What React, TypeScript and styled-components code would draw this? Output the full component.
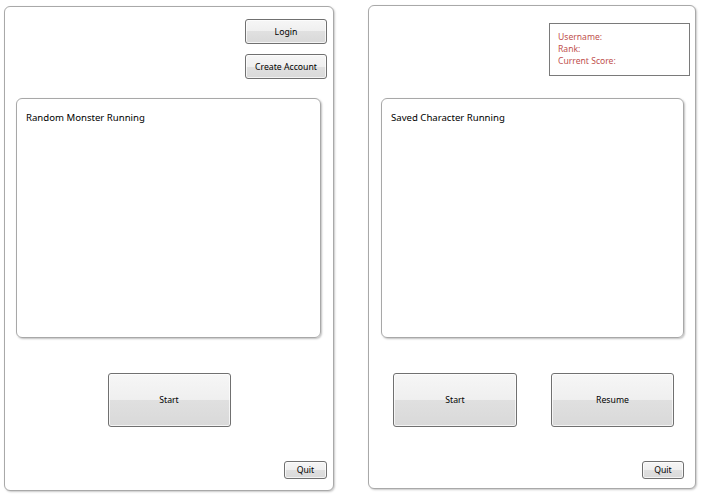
import React from "react";
import styled, { createGlobalStyle } from "styled-components";

const Global = createGlobalStyle`
  html, body { margin: 0; padding: 0; background: #ffffff; }
  body { font-family: "Noto Sans", "Open Sans", sans-serif; }
  * { box-sizing: border-box; }
`;

const Page = styled.div`
  display: flex;
  align-items: flex-start;
  gap: 34px;
  padding-left: 4px;
  width: 705px;
  height: 499px;
`;

const Panel = styled.div<{ $top: number; $w: number; $h: number }>`
  margin-top: ${(p) => p.$top}px;
  width: ${(p) => p.$w}px;
  height: ${(p) => p.$h}px;
  border: 1px solid #a9a9a9;
  border-radius: 6px;
  background: #ffffff;
  box-shadow: 1px 1px 2px rgba(0, 0, 0, 0.22);
  display: flex;
  flex-direction: column;
`;

const Button = styled.button<{ $w: number; $h: number; $mt?: number; $pb?: number }>`
  width: ${(p) => p.$w}px;
  height: ${(p) => p.$h}px;
  margin-top: ${(p) => p.$mt ?? 0}px;
  padding: 0 0 ${(p) => p.$pb ?? 0}px 0;
  border: 1px solid #707070;
  border-radius: 3px;
  background: linear-gradient(
    #f6f6f6 0%,
    #efefef 50%,
    #e0e0e0 50%,
    #d9d9d9 100%
  );
  box-shadow: inset 0 0 0 1px rgba(255, 255, 255, 0.7);
  font-family: "Noto Sans", "Open Sans", sans-serif;
  font-size: 8.7px;
  color: #000000;
  display: flex;
  align-items: center;
  justify-content: center;
  flex-shrink: 0;
`;

const RightStack = styled.div<{ $mr: number }>`
  display: flex;
  flex-direction: column;
  align-items: flex-end;
  gap: 10px;
  margin-right: ${(p) => p.$mr}px;
`;

const RunBox = styled.div<{ $ml: number; $w: number; $mt: number }>`
  margin-top: ${(p) => p.$mt}px;
  margin-left: ${(p) => p.$ml}px;
  width: ${(p) => p.$w}px;
  height: 240px;
  border: 1px solid #a8a8a8;
  border-radius: 6px;
  box-shadow: 1px 1px 2px rgba(0, 0, 0, 0.25);
  padding: 12px 0 0 9px;
  font-size: 9.6px;
  color: #000000;
  flex-shrink: 0;
`;

const CenterRow = styled.div`
  display: flex;
  justify-content: center;
`;

const ButtonRow = styled.div`
  display: flex;
  gap: 34px;
  padding-left: 24px;
`;

const QuitRow = styled.div<{ $mr: number }>`
  display: flex;
  justify-content: flex-end;
  margin-top: 34px;
  margin-right: ${(p) => p.$mr}px;
`;

const InfoBox = styled.div`
  align-self: flex-end;
  margin-top: 17px;
  margin-right: 5px;
  width: 141px;
  height: 53px;
  border: 1px solid #7a7a7a;
  padding: 7px 0 0 8px;
  color: #c0504d;
  font-size: 8.6px;
  line-height: 12px;
  display: flex;
  flex-direction: column;
`;

export default function App() {
  return (
    <>
      <Global />
      <Page>
        <Panel $top={6} $w={330} $h={485}>
          <RightStack $mr={6}>
            <Button $w={82} $h={25} $mt={12}>Login</Button>
            <Button $w={82} $h={25}>Create Account</Button>
          </RightStack>
          <RunBox $mt={19} $ml={11} $w={305}>Random Monster Running</RunBox>
          <CenterRow>
            <Button $w={123} $h={54} $mt={35} $pb={1}>Start</Button>
          </CenterRow>
          <QuitRow $mr={6}>
            <Button $w={43} $h={18}>Quit</Button>
          </QuitRow>
        </Panel>
        <Panel $top={5} $w={328} $h={484}>
          <InfoBox>
            <span>Username:</span>
            <span>Rank:</span>
            <span>Current Score:</span>
          </InfoBox>
          <RunBox $mt={22} $ml={12} $w={303}>Saved Character Running</RunBox>
          <ButtonRow>
            <Button $w={124} $h={54} $mt={35} $pb={1}>Start</Button>
            <Button $w={123} $h={54} $mt={35} $pb={1}>Resume</Button>
          </ButtonRow>
          <QuitRow $mr={11}>
            <Button $w={42} $h={18}>Quit</Button>
          </QuitRow>
        </Panel>
      </Page>
    </>
  );
}
